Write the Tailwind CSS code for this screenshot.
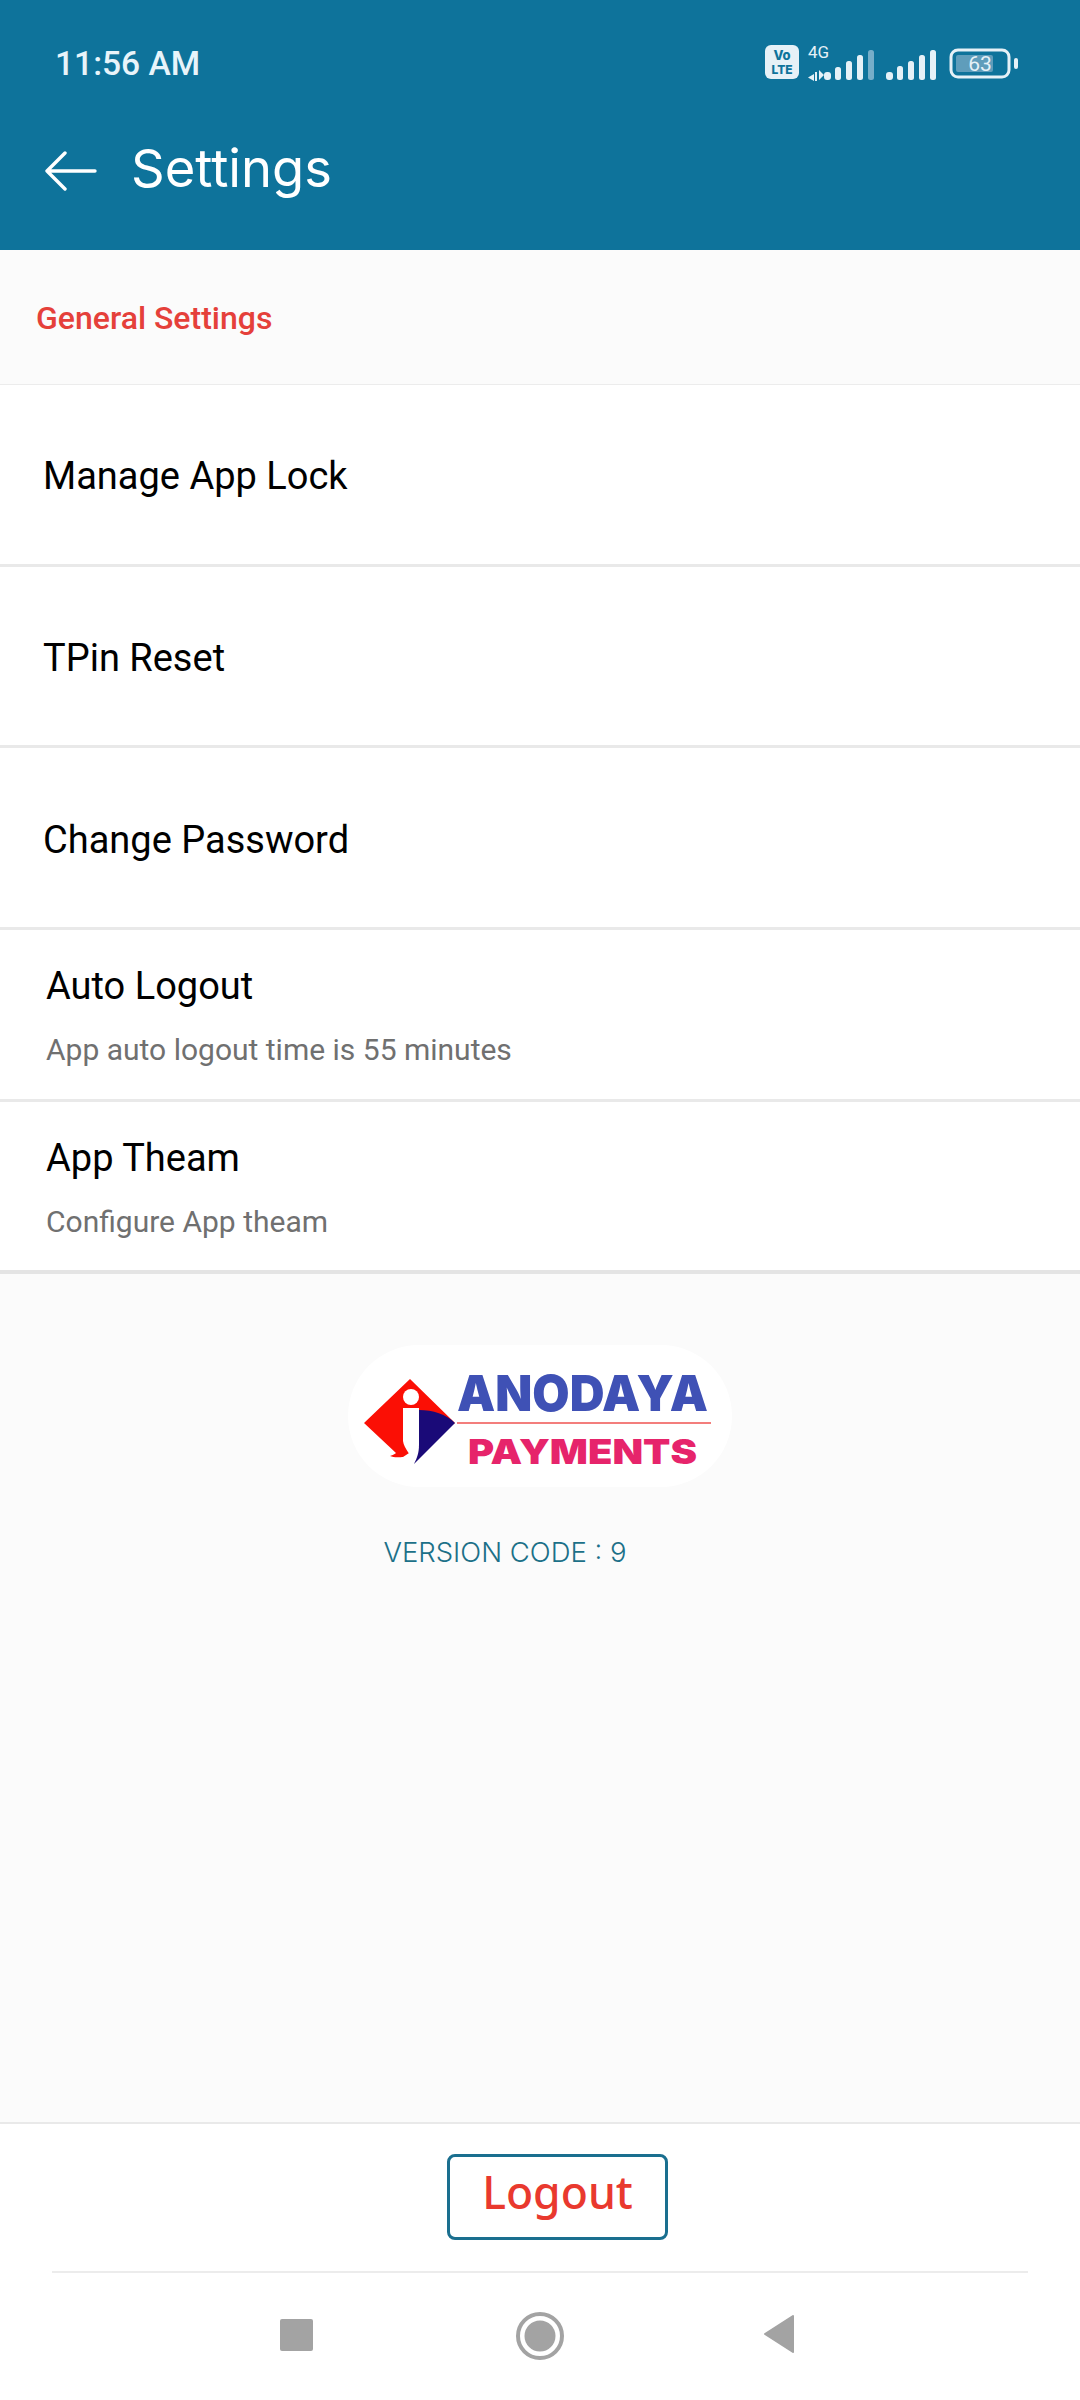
<!DOCTYPE html>
<html>
<head>
<meta charset="utf-8">
<script src="https://cdn.jsdelivr.net/npm/@tailwindcss/browser@4"></script>
</head>
<body class="m-0 bg-white">
<div class="relative flex h-[2400px] w-[1080px] flex-col overflow-hidden bg-[#fbfbfb] font-['Roboto',sans-serif]">
  <!-- Header -->
  <header class="relative h-[250px] shrink-0 bg-[#0e739b] text-white">
    <div class="flex h-[146px] items-start justify-between pl-[55px] pr-[57px] pt-[44px]">
      <span class="text-[33.6px] leading-[40px] font-medium text-[#e8f4fa]">11:56 AM</span>
      <svg width="267" height="40" viewBox="0 0 267 40" class="-mt-[2px]">
        <rect x="9" y="3" width="34" height="34" rx="6" fill="#e6f1f7"/>
        <text x="26" y="18" text-anchor="middle" font-family="Inter" font-size="13" font-weight="800" fill="#0e739b">Vo</text>
        <text x="26" y="32" text-anchor="middle" font-family="Inter" font-size="12" font-weight="800" fill="#0e739b">LTE</text>
        <text x="52" y="16" font-family="Roboto" font-size="17" fill="#e6f1f7">4G</text>
        <path d="M58 32l-6 3.5 6 3.500zM60 38v-5M63 38v-10l5 5z" fill="#e6f1f7"/>
        <path d="M60 30v9" stroke="#e6f1f7" stroke-width="2"/>
        <rect x="68" y="30" width="7" height="8" rx="3" fill="#e6f1f7"/>
        <rect x="79" y="25" width="6" height="13" rx="2.500" fill="#e6f1f7"/>
        <rect x="90" y="19" width="6" height="19" rx="2.500" fill="#e6f1f7"/>
        <rect x="101" y="13" width="6" height="25" rx="2.500" fill="#e6f1f7"/>
        <rect x="112" y="8" width="6" height="30" rx="2.500" fill="#76aec9"/>
        <rect x="130" y="30" width="7" height="8" rx="3" fill="#e6f1f7"/>
        <rect x="141" y="24" width="6" height="14" rx="2.500" fill="#e6f1f7"/>
        <rect x="152" y="19" width="6" height="19" rx="2.500" fill="#e6f1f7"/>
        <rect x="163" y="13" width="6" height="25" rx="2.500" fill="#e6f1f7"/>
        <rect x="174" y="8" width="6" height="30" rx="2.500" fill="#e6f1f7"/>
        <rect x="195" y="8" width="58" height="27" rx="7" fill="none" stroke="#e6f1f7" stroke-width="3"/>
        <rect x="200" y="13" width="37" height="17" rx="2" fill="#5f9dbb"/>
        <text x="224" y="29" text-anchor="middle" font-family="Roboto" font-size="21" fill="#e6f1f7">63</text>
        <rect x="258" y="16" width="4" height="11" rx="2" fill="#e6f1f7"/>
      </svg>
    </div>
    <div class="flex items-center pl-[45px]">
      <svg width="52" height="40" viewBox="0 0 52 40" fill="none" stroke="#fff" stroke-width="3.400" stroke-linecap="round" stroke-linejoin="round">
        <path d="M50 20H2M20 2L2 20l18 18"/>
      </svg>
      <span class="ml-[34px] -mt-[6px] font-['Inter',sans-serif] text-[52.500px] leading-[56px]">Settings</span>
    </div>
  </header>

  <!-- General Settings label -->
  <div class="flex h-[135px] shrink-0 items-center border-b border-[#ececec] pl-[36px]">
    <span class="mt-[2px] text-[32px] font-medium text-[#e5403a]">General Settings</span>
  </div>

  <!-- Rows -->
  <div class="flex h-[182px] shrink-0 items-center border-b-[3px] border-[#e9e9e9] bg-white pl-[43px]"><span class="mt-[2px] text-[38px] leading-[48px] text-black">Manage App Lock</span></div>
  <div class="flex h-[181px] shrink-0 items-center border-b-[3px] border-[#e9e9e9] bg-white pl-[43px]"><span class="mt-[4px] text-[38px] leading-[48px] text-black">TPin Reset</span></div>
  <div class="flex h-[182px] shrink-0 items-center border-b-[3px] border-[#e9e9e9] bg-white pl-[43px]"><span class="mt-[4px] text-[38px] leading-[48px] text-black">Change Password</span></div>
  <div class="flex h-[172px] shrink-0 flex-col border-b-[3px] border-[#e9e9e9] bg-white pl-[46px] pt-[32px]">
    <span class="text-[38px] leading-[48px] text-black">Auto Logout</span>
    <span class="mt-[22px] text-[30px] leading-[36px] text-[#707070]">App auto logout time is 55 minutes</span>
  </div>
  <div class="flex h-[172px] shrink-0 flex-col border-b-[4px] border-[#e4e4e4] bg-white pl-[46px] pt-[32px]">
    <span class="text-[38px] leading-[48px] text-black">App Theam</span>
    <span class="mt-[22px] text-[30px] leading-[36px] text-[#707070]">Configure App theam</span>
  </div>

  <!-- Logo + version -->
  <div class="flex flex-1 flex-col items-center pt-[71px]">
    <div class="h-[142px] w-[384px] rounded-[71px] bg-white">
      <svg width="384" height="142" viewBox="0 0 384 142">
        <path d="M16 78L62 34L107 78L55 112C53 112 46 113 42 111C45 110 47 109 48 108Z" fill="#fb0f05"/>
        <path d="M55 63H71V100C71 108 69 114 66 119C64 110 56 104 55 96Z" fill="#fff"/>
        <path d="M71 65C85 65 98 69 107 78L66 119C69 113 71 108 71 100Z" fill="#1a0a78"/>
        <circle cx="63" cy="52" r="8" fill="#fff"/>
        <line x1="109" y1="78" x2="363" y2="78" stroke="#ef5350" stroke-width="1.500"/>
        <text x="109" y="66" textLength="251" lengthAdjust="spacingAndGlyphs" font-family="Inter" font-weight="900" font-size="49" fill="#3f51b5">ANODAYA</text>
        <text x="120" y="119" textLength="229" lengthAdjust="spacingAndGlyphs" font-family="Inter" font-weight="900" font-size="34" fill="#e6246b">PAYMENTS</text>
      </svg>
    </div>
    <p class="mr-[70px] mt-[47px] font-['Inter',sans-serif] text-[27.500px] leading-[36px] font-light text-[#1c7088]">VERSION CODE : 9</p>
  </div>

  <!-- Bottom -->
  <div class="h-[278px] shrink-0 border-t-2 border-[#e9e9e9] bg-white">
    <div class="flex h-[147px] justify-center pl-[35px] pt-[30px]">
      <div class="flex h-[86px] w-[221px] items-center justify-center rounded-[8px] border-[3px] border-[#1a6f8f] font-['Noto_Sans',sans-serif] text-[44.500px] leading-none font-medium text-[#e9392e]"><span class="-mt-[10px]">Logout</span></div>
    </div>
    <div class="mx-[52px] border-t-2 border-[#ececec]"></div>
    <div class="relative h-[128px]">
      <div class="absolute left-[280px] top-[46px] h-[32px] w-[33px] rounded-[2px] bg-[#a3a3a3]"></div>
      <svg class="absolute left-[512px] top-[38px]" width="56" height="50" viewBox="0 0 56 50">
        <circle cx="28" cy="25" r="22" fill="none" stroke="#a3a3a3" stroke-width="4"/>
        <circle cx="28" cy="25" r="15.500" fill="#a3a3a3"/>
      </svg>
      <svg class="absolute left-[762px] top-[41px]" width="34" height="40" viewBox="0 0 34 40">
        <path d="M31 2L3 20l28 18z" fill="#a3a3a3" stroke="#a3a3a3" stroke-width="2" stroke-linejoin="round"/>
      </svg>
    </div>
  </div>
</div>
</body>
</html>
